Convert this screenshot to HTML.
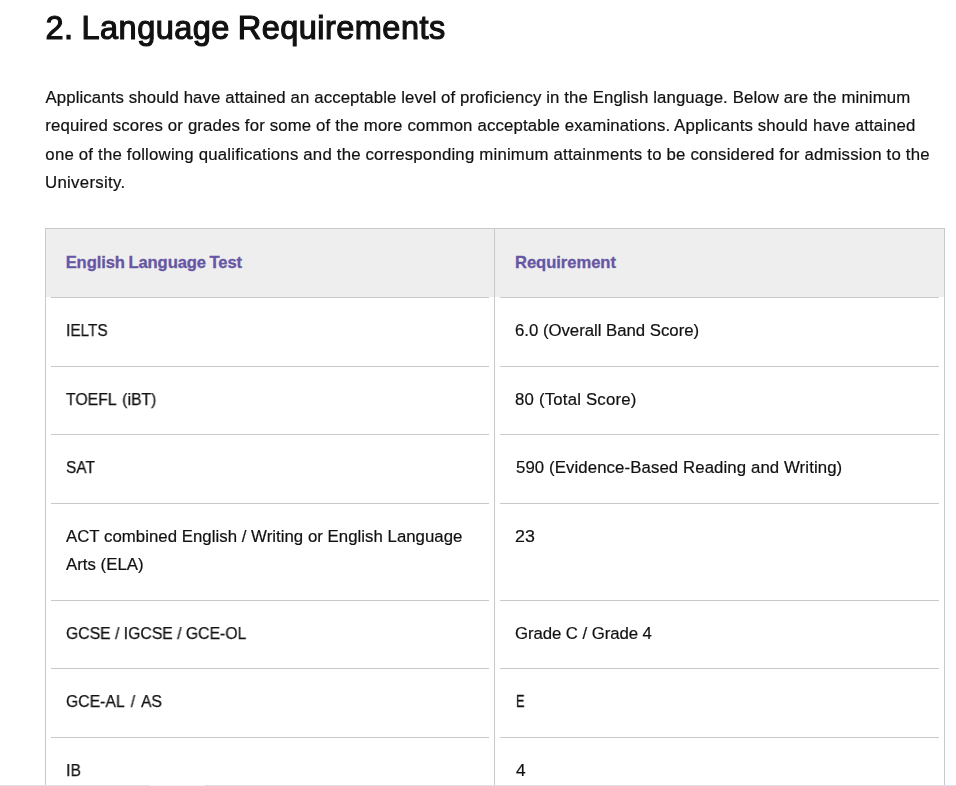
<!DOCTYPE html>
<html lang="en">
<head>
<meta charset="utf-8">
<title>Language Requirements</title>
<style>
  html, body { margin: 0; padding: 0; background: #fff; }
  body {
    width: 956px; height: 786px; overflow: hidden; position: relative;
    font-family: "Liberation Sans", Arial, sans-serif;
    color: #111111; -webkit-text-stroke: 0.2px #111111;
  }
  h2 {
    position: absolute; left: 45px; top: 8px; margin: 0;
    font-size: 32.5px; line-height: 40px; font-weight: normal; -webkit-text-stroke: 1.15px #111;
    white-space: nowrap; color: #111;
  }
  h2 span { display: inline-block; }
  h2, p.intro, table.req td span { will-change: transform; }
  p.intro {
    position: absolute; left: 45px; top: 84px; margin: 0;
    font-size: 16.8px; line-height: 28.3px; white-space: nowrap;
  }
  p.intro span { display: block; }
  table.req {
    position: absolute; left: 45px; top: 228px; width: 900px;
    border: 1px solid #c9c9c9; border-collapse: separate; border-spacing: 0;
    table-layout: fixed; font-size: 16.8px; line-height: 28.3px;
  }
  table.req td, table.req th {
    position: relative; padding: 19px 0 0 20px; text-align: left; vertical-align: top;
    font-weight: normal; white-space: nowrap; box-sizing: border-box;
  }
  table.req th { padding-top: 20px; }
  table.req td span, table.req th span { display: block; }
  table.req td:first-child, table.req th:first-child { border-right: 1px solid #c9c9c9; width: 449px; }
  table.req td::after, table.req th::after {
    content: ""; position: absolute; left: 5px; right: 5px; bottom: 0; height: 1px; background: #c9c9c9;
  }
  table.req th { background: linear-gradient(#eee,#eee) no-repeat; background-size: 100% calc(100% - 1px); color: #6656a3; font-weight: bold; font-size: 16.6px; -webkit-text-stroke: 0.3px #6656a3; }
  .bottomline i { position: absolute; left: 150px; top: 0; width: 56px; height: 1px; background: #efeff6; }
  .bottomline b { position: absolute; left: 206px; top: 0; width: 1px; height: 1px; background: #c4c4d2; }
  .bottomline { position: absolute; left: 0; top: 785px; width: 956px; height: 1px; background: #dedee9; }
</style>
</head>
<body>
  <h2><span style="letter-spacing:0.467px;word-spacing:-1.600px;margin-left:0.59px;">2. Language Requirements</span></h2>
  <p class="intro">
    <span style="letter-spacing:0.107px;margin-left:0.52px;">Applicants should have attained an acceptable level of proficiency in the English language. Below are the minimum</span>
    <span style="letter-spacing:0.144px;margin-left:0.25px;">required scores or grades for some of the more common acceptable examinations. Applicants should have attained</span>
    <span style="letter-spacing:0.195px;margin-left:0.36px;">one of the following qualifications and the corresponding minimum attainments to be considered for admission to the</span>
    <span style="letter-spacing:0.306px;margin-left:-0.03px;">University.</span>
  </p>
  <table class="req">
    <tr style="height:69px"><th><span style="letter-spacing:-0.098px;word-spacing:-1.000px;margin-left:-0.37px;">English Language Test</span></th><th><span style="letter-spacing:-0.050px;margin-left:0.00px;">Requirement</span></th></tr>
    <tr style="height:69px"><td><span style="letter-spacing:0.000px;margin-left:-0.44px;-webkit-text-stroke-width:0.25px;transform:scaleX(0.9166);transform-origin:0 50%;">IELTS</span></td><td><span style="letter-spacing:-0.024px;margin-left:0.07px;">6.0 (Overall Band Score)</span></td></tr>
    <tr style="height:68px"><td><span style="letter-spacing:0.000px;word-spacing:2.000px;margin-left:0.39px;-webkit-text-stroke-width:0.25px;transform:scaleX(0.9398);transform-origin:0 50%;">TOEFL (iBT)</span></td><td><span style="letter-spacing:0.196px;margin-left:0.12px;">80 (Total Score)</span></td></tr>
    <tr style="height:69px"><td><span style="letter-spacing:0.000px;margin-left:-0.22px;-webkit-text-stroke-width:0.25px;transform:scaleX(0.9183);transform-origin:0 50%;">SAT</span></td><td><span style="letter-spacing:0.095px;margin-left:0.56px;">590 (Evidence-Based Reading and Writing)</span></td></tr>
    <tr style="height:97px"><td><span style="letter-spacing:0.031px;margin-left:-0.04px;">ACT combined English / Writing or English Language</span><span style="letter-spacing:0.017px;margin-left:-0.04px;">Arts (ELA)</span></td><td><span style="letter-spacing:0.000px;margin-left:0.26px;transform:scaleX(1.0625);transform-origin:0 50%;">23</span></td></tr>
    <tr style="height:68px"><td><span style="letter-spacing:0.000px;margin-left:-0.47px;-webkit-text-stroke-width:0.25px;transform:scaleX(0.9384);transform-origin:0 50%;">GCSE / IGCSE / GCE-OL</span></td><td><span style="letter-spacing:-0.076px;margin-left:0.17px;">Grade C / Grade 4</span></td></tr>
    <tr style="height:69px"><td><span style="letter-spacing:0.000px;word-spacing:2.500px;margin-left:-0.35px;-webkit-text-stroke-width:0.25px;transform:scaleX(0.9381);transform-origin:0 50%;">GCE-AL / AS</span></td><td><span style="margin-left:0.81px;-webkit-text-stroke-width:0.40px;transform:scaleX(0.7594);transform-origin:0 50%;">E</span></td></tr>
    <tr style="height:69px"><td><span style="letter-spacing:0.000px;margin-left:-0.28px;-webkit-text-stroke-width:0.25px;transform:scaleX(0.9424);transform-origin:0 50%;">IB</span></td><td><span style="margin-left:0.61px;transform:scaleX(1.0296);transform-origin:0 50%;">4</span></td></tr>
  </table>
  <div class="bottomline"><i></i><b></b></div>
</body>
</html>
